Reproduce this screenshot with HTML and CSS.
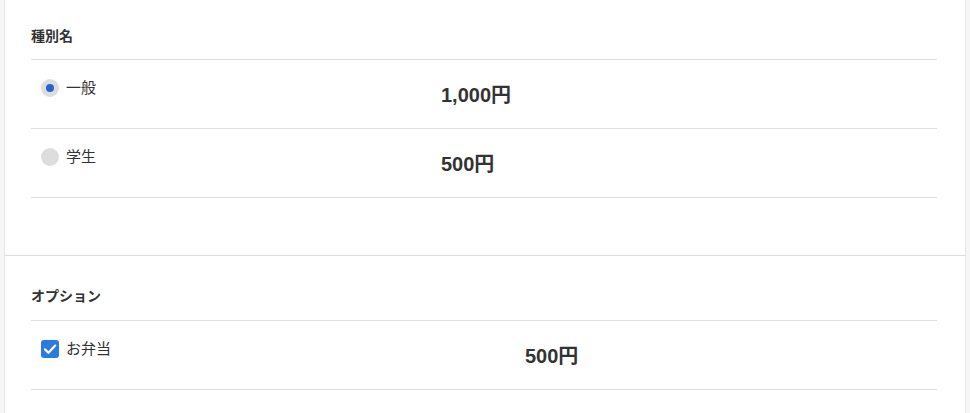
FILE: index.html
```html
<!DOCTYPE html>
<html lang="ja">
<head>
<meta charset="utf-8">
<link rel="stylesheet" href="styles.css">
</head>
<body>
<div class="card">
  <section class="section first">
    <h2 class="heading">種別名</h2>
    <div class="row grid-a">
      <label class="choice"><span class="radio checked"></span><span class="label">一般</span></label>
      <div class="price">1,000円</div>
    </div>
    <div class="row grid-a">
      <label class="choice"><span class="radio"></span><span class="label">学生</span></label>
      <div class="price">500円</div>
    </div>
  </section>
  <section class="section second">
    <h2 class="heading">オプション</h2>
    <div class="row grid-b">
      <label class="choice"><span class="checkbox"><svg viewBox="0 0 18 18" width="18" height="18"><path d="M4 9.4 L7.4 12.8 L14.2 5.6" fill="none" stroke="#fff" stroke-width="2.2" stroke-linecap="round" stroke-linejoin="round"/></svg></span><span class="label">お弁当</span></label>
      <div class="price">500円</div>
    </div>
  </section>
</div>
</body>
</html>
```

FILE: styles.css
```css
html, body {
  margin: 0;
  padding: 0;
  background: #f6f6f6;
  font-family: "Liberation Sans", "Noto Sans CJK JP", sans-serif;
  color: #333;
}
.card {
  margin-left: 4px;
  width: 960px;
  background: #fff;
  border-left: 1px solid #e6e6e6;
  border-right: 1px solid #e6e6e6;
  min-height: 413px;
}
.section {
  padding: 0 28px 0 26px;
}
.section.first {
  padding-top: 26px;
  padding-bottom: 57px;
}
.section.second {
  border-top: 1px solid #dcdcdc;
  padding-top: 30px;
  padding-bottom: 24px;
}
.heading {
  margin: 0;
  font-size: 14px;
  font-weight: bold;
  line-height: 20px;
  padding-bottom: 13px;
  border-bottom: 1px solid #dedede;
}
.section.second .heading {
  padding-bottom: 14px;
}
.row {
  display: grid;
  height: 68px;
  border-bottom: 1px solid #dedede;
  align-items: start;
}
.grid-a {
  grid-template-columns: 410px 1fr;
}
.grid-b {
  grid-template-columns: 494px 1fr;
}
.choice {
  display: flex;
  align-items: center;
  gap: 7px;
  padding: 17px 0 0 10px;
}
.label {
  font-size: 15px;
  line-height: 22px;
}
.radio {
  width: 18px;
  height: 18px;
  border-radius: 50%;
  background: #dddddd;
  display: flex;
  align-items: center;
  justify-content: center;
}
.radio.checked::after {
  content: "";
  width: 8px;
  height: 8px;
  border-radius: 50%;
  background: #2762d0;
}
.checkbox {
  width: 18px;
  height: 18px;
  border-radius: 3px;
  background: #2a7be0;
  display: block;
}
.checkbox svg {
  display: block;
}
.price {
  font-size: 20px;
  font-weight: bold;
  line-height: 28px;
  padding-top: 21px;
}
```
